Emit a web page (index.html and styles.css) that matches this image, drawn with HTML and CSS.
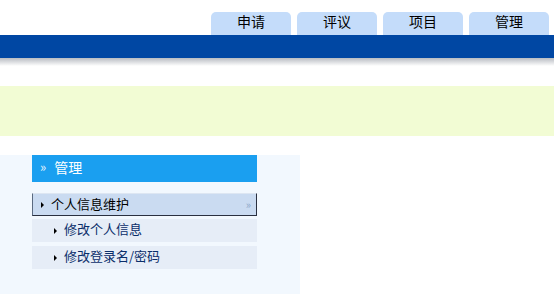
FILE: index.html
```html
<!DOCTYPE html>
<html>
<head>
<meta charset="utf-8">
<link rel="stylesheet" href="styles.css">
</head>
<body>
<div class="top">
  <div class="tabs">
    <div class="tab">申请</div>
    <div class="tab">评议</div>
    <div class="tab">项目</div>
    <div class="tab">管理</div>
  </div>
  <div class="bar"></div>
  <div class="shadow"></div>
</div>
<div class="notice"></div>
<div class="main">
  <div class="side">
    <div class="head"><span class="dbl">»</span>管理</div>
    <div class="group"><span class="tri"></span>个人信息维护<span class="dbl small">»</span></div>
    <div class="sub"><span class="tri"></span>修改个人信息</div>
    <div class="sub"><span class="tri"></span>修改登录名/密码</div>
  </div>
</div>
</body>
</html>
```
FILE: styles.css
```css
html, body { margin: 0; padding: 0; background: #fff; }
body { font-family: "Noto Sans CJK SC", "Noto Sans", sans-serif; width: 554px; height: 294px; overflow: hidden; }
.top { height: 66px; }
.tabs { display: flex; justify-content: flex-end; gap: 6px; padding: 12px 5px 0 0; height: 23px; }
.tab { width: 80px; height: 23px; background: #c4dcfa; border-radius: 5px 5px 0 0; font-size: 14px; line-height: 19px; text-align: center; color: #000; }
.bar { height: 23px; background: #0047a3; }
.shadow { height: 8px; background: linear-gradient(#b8bcc2, #ffffff); }
.notice { margin-top: 20px; height: 50px; background: #f2fcd4; }
.main { margin-top: 19px; display: flex; }
.side { width: 300px; height: 139px; background: #f2f8fe; padding: 0 0 0 32px; box-sizing: border-box; display: flex; flex-direction: column; }
.head { width: 225px; height: 27px; box-sizing: border-box; padding-bottom: 3px; background: #1a9ff0; color: #fff; font-size: 14px; line-height: 20px; display: flex; align-items: center; margin-bottom: 11px; }
.head .dbl { font-size: 13px; margin: 0 8px 0 8px; color: #e4f2fd; }
.group { width: 225px; height: 23px; box-sizing: border-box; padding-bottom: 2px; background: #cadbf1; border-left: 1px solid #5a6a80; border-right: 1px solid #2a3040; border-bottom: 1px solid #2a3040; border-top: 1px solid #dde6f2; font-size: 13px; line-height: 18px; display: flex; align-items: center; color: #000; margin-bottom: 3px; }
.group .tri { margin: 2px 7px 0 8px; }
.group .small { margin-left: auto; margin-right: 5px; font-size: 11px; color: #8aa6c8; }
.sub { width: 225px; height: 23px; box-sizing: border-box; padding-bottom: 3px; background: #e6edf7; font-size: 13px; line-height: 18px; color: #0a2e6a; display: flex; align-items: center; margin-bottom: 4px; }
.sub .tri { margin: 3px 7px 0 22px; }
.tri { width: 0; height: 0; border-left: 3px solid #000; border-top: 3px solid transparent; border-bottom: 3px solid transparent; }
```
